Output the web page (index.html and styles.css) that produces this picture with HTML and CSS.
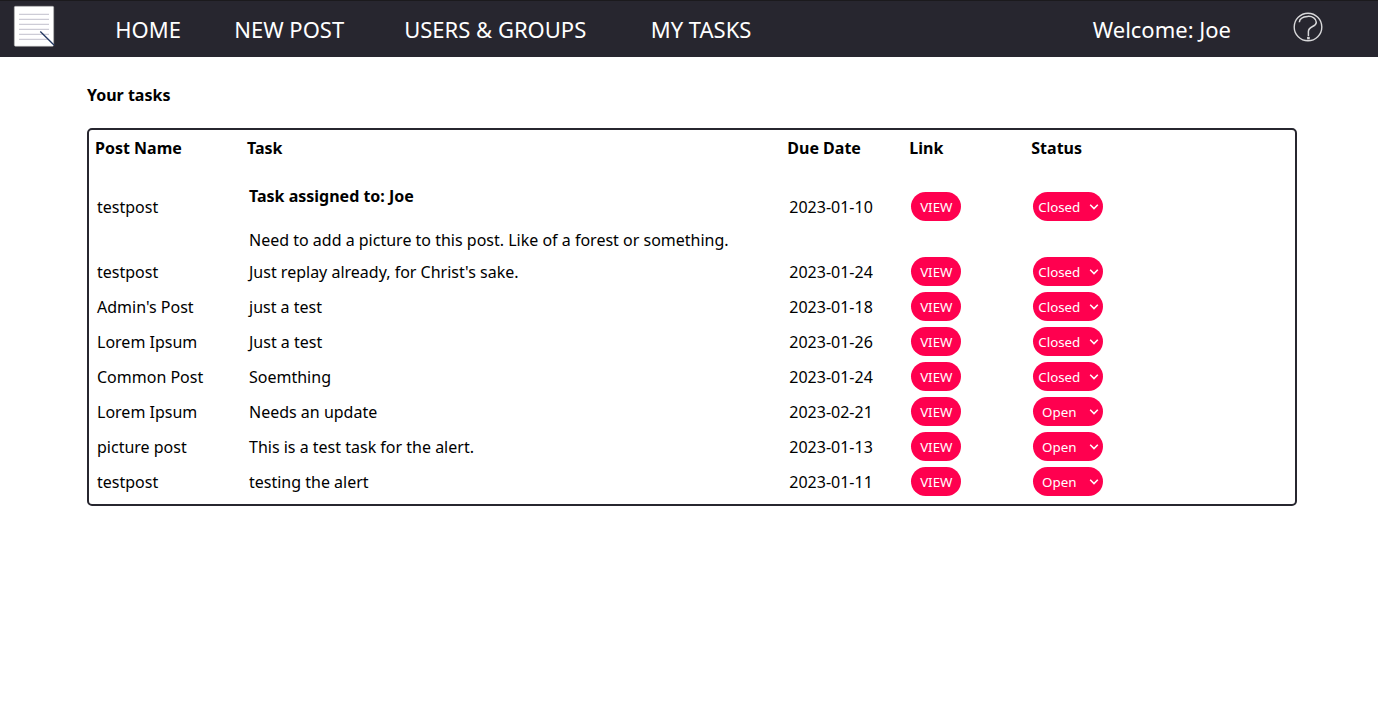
FILE: index.html
```html
<!DOCTYPE html>
<html lang="en">
<head>
<meta charset="utf-8">
<title>My Tasks</title>
<link rel="stylesheet" href="styles.css">
</head>
<body>
<header class="navbar">
  <svg class="logo" width="42" height="42" viewBox="0 0 42 42">
    <rect x="1.3" y="1.3" width="39.4" height="40" rx="1.2" fill="#fff" stroke="#aaa" stroke-width=".6"/>
    <path d="M6 9.4h30M6 14.4h30M6 19.4h30M6 24.4h30M6 29.4h30M6 34.4h30" stroke="#cdccd6" stroke-width="1.2"/>
    <path d="M27.3 26.5L41.2 40.2" stroke="#20355f" stroke-width="1.3"/>
  </svg>
  <nav class="links">
    <a class="home">HOME</a>
    <a class="new-post">NEW POST</a>
    <a class="users">USERS &amp; GROUPS</a>
    <a class="tasks">MY TASKS</a>
  </nav>
  <span class="welcome">Welcome: Joe</span>
  <svg class="help" width="30" height="30" viewBox="0 0 30 30" fill="none" stroke="#d8d8da">
    <circle cx="15" cy="15" r="13.8" stroke-width="1.4"/>
    <path d="M6.3 10.2C6.6 6.4 10 4.7 14.5 4.4C19.6 4 23.3 6.5 23.3 10.2C23.3 15.2 15.5 13.8 15.4 19.5V24.3" stroke-width="1.5"/>
    <rect x="14.6" y="25.3" width="1.7" height="1.7" fill="#d8d8da" stroke-width=".7"/>
  </svg>
</header>
<main class="content">
  <h1 class="title">Your tasks</h1>
  <section class="board">
    <div class="row head"><span>Post Name</span><span>Task</span><span>Due Date</span><span>Link</span><span>Status</span></div>
    <div class="row tall"><span>testpost</span><div class="note"><h4>Task assigned to: Joe</h4><p>Need to add a picture to this post. Like of a forest or something.</p></div><span>2023-01-10</span><button class="view">VIEW</button><button class="status"><span class="label">Closed</span><svg class="chevron" viewBox="0 0 10 8"><path d="M1.2 1.7L5 5.6L8.8 1.7"/></svg></button></div>
    <div class="row"><span>testpost</span><span>Just replay already, for Christ's sake.</span><span>2023-01-24</span><button class="view">VIEW</button><button class="status"><span class="label">Closed</span><svg class="chevron" viewBox="0 0 10 8"><path d="M1.2 1.7L5 5.6L8.8 1.7"/></svg></button></div>
    <div class="row"><span>Admin's Post</span><span>just a test</span><span>2023-01-18</span><button class="view">VIEW</button><button class="status"><span class="label">Closed</span><svg class="chevron" viewBox="0 0 10 8"><path d="M1.2 1.7L5 5.6L8.8 1.7"/></svg></button></div>
    <div class="row"><span>Lorem Ipsum</span><span>Just a test</span><span>2023-01-26</span><button class="view">VIEW</button><button class="status"><span class="label">Closed</span><svg class="chevron" viewBox="0 0 10 8"><path d="M1.2 1.7L5 5.6L8.8 1.7"/></svg></button></div>
    <div class="row"><span>Common Post</span><span>Soemthing</span><span>2023-01-24</span><button class="view">VIEW</button><button class="status"><span class="label">Closed</span><svg class="chevron" viewBox="0 0 10 8"><path d="M1.2 1.7L5 5.6L8.8 1.7"/></svg></button></div>
    <div class="row"><span>Lorem Ipsum</span><span>Needs an update</span><span>2023-02-21</span><button class="view">VIEW</button><button class="status"><span class="label">Open</span><svg class="chevron" viewBox="0 0 10 8"><path d="M1.2 1.7L5 5.6L8.8 1.7"/></svg></button></div>
    <div class="row"><span>picture post</span><span>This is a test task for the alert.</span><span>2023-01-13</span><button class="view">VIEW</button><button class="status"><span class="label">Open</span><svg class="chevron" viewBox="0 0 10 8"><path d="M1.2 1.7L5 5.6L8.8 1.7"/></svg></button></div>
    <div class="row"><span>testpost</span><span>testing the alert</span><span>2023-01-11</span><button class="view">VIEW</button><button class="status"><span class="label">Open</span><svg class="chevron" viewBox="0 0 10 8"><path d="M1.2 1.7L5 5.6L8.8 1.7"/></svg></button></div>
  </section>
</main>
</body>
</html>
```
FILE: styles.css
```css
* { box-sizing: border-box; }
body {
  margin: 0;
  background: #fff;
  color: #000;
  font: 16px/22px "Noto Sans", sans-serif;
}
.navbar {
  display: flex;
  align-items: flex-start;
  height: 57px;
  padding: 4px 55px 0 13px;
  background: #27262f;
  border-top: 1px solid #1b1a1d;
  color: #fff;
  font-size: 22px;
  line-height: 30px;
}
.logo { flex: none; }
.links { display: flex; padding: 9px 0 0 60.2px; white-space: nowrap; }
.home { width: 119px; }
.new-post { width: 170px; }
.users { width: 246.5px; }
.welcome { margin-left: auto; padding-top: 9px; }
.help { flex: none; margin: 7px 0 0 62px; }
.content { padding: 27px 81px 0 87px; }
.title { margin: 0 0 22px; font-size: 16px; line-height: 22px; }
.board {
  height: 378px;
  padding: 7px 6px 5px;
  border: 2px solid #27262f;
  border-radius: 5px;
}
.row {
  display: grid;
  grid-template-columns: 152px 540.3px 122px 122px 1fr;
  align-items: center;
  height: 35px;
  padding-left: 2px;
}
.head { height: 22px; padding-left: 0; font-weight: 700; }
.tall { height: 95px; }
.note { align-self: end; padding-bottom: 3px; }
.note h4 { margin: 0 0 22px; font-size: 16px; }
.note p { margin: 0; }
.view, .status {
  height: 29px;
  padding: 0;
  border: 0;
  border-radius: 15px;
  background: #ff004f;
  color: #fff;
  font: 13.333px/18px "Noto Sans", sans-serif;
}
.view { width: 50px; padding-top: 1px; }
.status { display: flex; align-items: center; width: 70px; padding: 1px 4px 0; }
.label { width: 44px; text-align: center; }
.chevron { width: 10px; height: 8px; margin-left: auto; fill: none; stroke: #fff; stroke-width: 1.5; }
```
